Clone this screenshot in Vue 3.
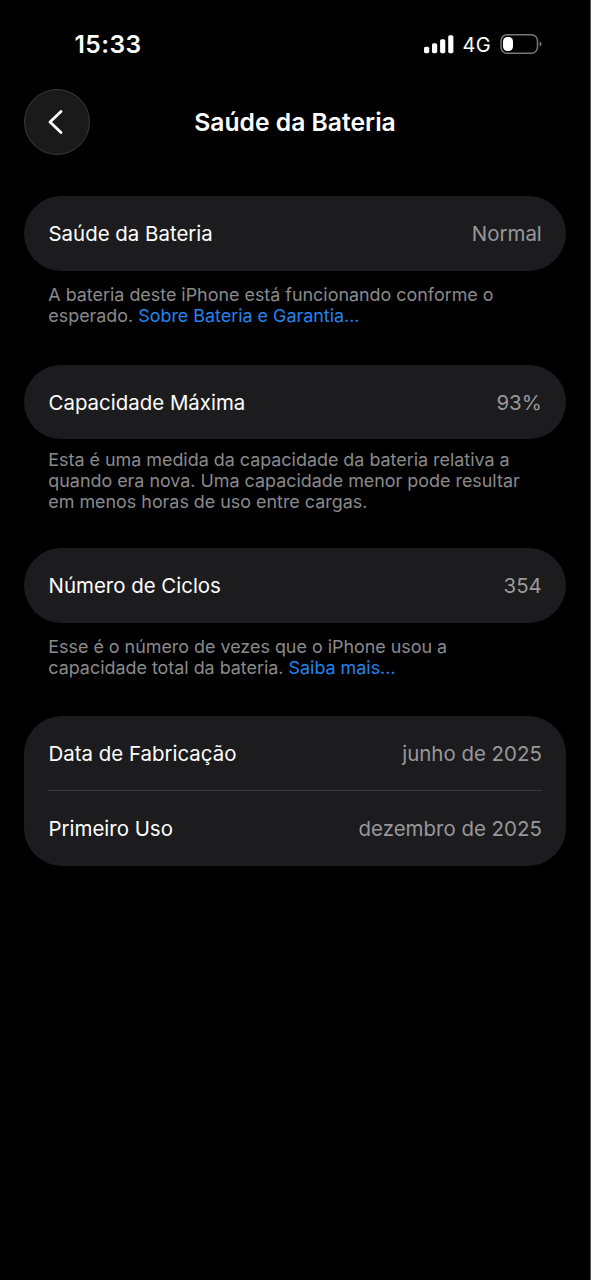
<script setup>
const groups = [
  { id: 'health', rows: [['Saúde da Bateria', 'Normal']], note: [['A bateria deste iPhone está funcionando conforme o'], ['esperado. ', 'Sobre Bateria e Garantia...']] },
  { id: 'capacity', rows: [['Capacidade Máxima', '93%']], note: [['Esta é uma medida da capacidade da bateria relativa a'], ['quando era nova. Uma capacidade menor pode resultar'], ['em menos horas de uso entre cargas.']] },
  { id: 'cycles', rows: [['Número de Ciclos', '354']], note: [['Esse é o número de vezes que o iPhone usou a'], ['capacidade total da bateria. ', 'Saiba mais...']] },
  { id: 'dates', rows: [['Data de Fabricação', 'junho de 2025'], ['Primeiro Uso', 'dezembro de 2025']], note: [] },
]
</script>

<template>
  <main class="screen">
    <header class="status">
      <span class="time">15:33</span>
      <div class="indicators">
        <svg width="30" height="19" viewBox="0 0 30 19" fill="#fff">
          <rect x="0" y="11.7" width="5.2" height="6.5" rx="1.6" />
          <rect x="8" y="8.2" width="5.2" height="10" rx="1.6" />
          <rect x="16.1" y="4.2" width="5.2" height="14" rx="1.6" />
          <rect x="24.2" y="0.2" width="5.2" height="18" rx="1.6" />
        </svg>
        <span class="network">4G</span>
        <svg width="42" height="20" viewBox="0 0 42 20">
          <rect x="1" y="0.8" width="36.5" height="18.4" rx="6" fill="none" stroke="#777" stroke-width="1.5" />
          <path d="M39.6 7.5v5q2-.6 2-2.5t-2-2.5" fill="#777" />
          <rect x="3" y="3" width="10" height="14" rx="4.4" fill="#fff" />
        </svg>
      </div>
    </header>
    <nav class="nav">
      <button class="back" aria-label="Voltar">
        <svg width="66" height="66" viewBox="0 0 66 66" fill="none" stroke="#fff" stroke-width="2.8" stroke-linecap="round" stroke-linejoin="round"><path d="M37 22.5L26 33l11 10.5" /></svg>
      </button>
      <h1>Saúde da Bateria</h1>
    </nav>
    <section v-for="g in groups" :key="g.id" :class="['group', g.id]">
      <div class="card">
        <div v-for="r in g.rows" :key="r[0]" class="row">
          <span class="label">{{ r[0] }}</span><span class="value">{{ r[1] }}</span>
        </div>
      </div>
      <p v-if="g.note.length" class="note">
        <span v-for="n in g.note" :key="n[0]" class="line">{{ n[0] }}<a v-if="n[1]">{{ n[1] }}</a></span>
      </p>
    </section>
  </main>
</template>

<style>
body { background: #000; }
</style>
<style scoped>
.screen { box-sizing: border-box; width: 591px; height: 1280px; background: #000; border-right: 1px solid #5c5c5c; color: #fff; font-family: Inter, "Liberation Sans", sans-serif; overflow: hidden; }
.status { height: 89px; box-sizing: border-box; padding: 0 48px 1px 74.5px; display: flex; align-items: center; justify-content: space-between; }
.time { font-size: 24.6px; font-weight: 600; letter-spacing: 0.4px; }
.indicators { display: flex; align-items: center; gap: 9px; }
.network { font-size: 20px; font-weight: 400; letter-spacing: 0.3px; padding-top: 1px; }
.nav { display: flex; height: 66px; padding: 0 24px; align-items: center; }
.back { width: 66px; height: 66px; box-sizing: border-box; border: 1px solid #3a3a3a; border-radius: 50%; background: #1a1a1a; padding: 0; display: flex; align-items: center; justify-content: center; }
.back svg { flex: none; }
h1 { flex: 1; margin: 0 66px 0 0; text-align: center; font-size: 24.7px; line-height: 32px; font-weight: 600; }
.group { height: 168.3px; padding: 0 23.7px 0 24px; }
.health { margin-top: 41.4px; }
.capacity { height: 183.3px; }
.cycles { height: 168px; }
.card { border-radius: 38px; background: #1c1c1e; padding: 0 24.5px 0 24px; }
.row { height: 74.8px; box-sizing: border-box; display: flex; align-items: center; justify-content: space-between; font-size: 20.45px; }
.label { padding-left: 0.5px; }
.dates .row:first-child { height: 74px; padding-top: 1px; }
.row + .row { height: 76px; border-top: 1px solid #39393b; margin-right: -0.5px; padding-right: 0.5px; }
.value { color: #98989b; }
.note { margin: 13px 24px 0 24.3px; font-size: 17.9px; line-height: 21px; color: #8a8a8c; white-space: pre; }
.capacity .note { margin-top: 9.2px; }
.line { display: block; }
a { color: #2483ed; }
</style>
